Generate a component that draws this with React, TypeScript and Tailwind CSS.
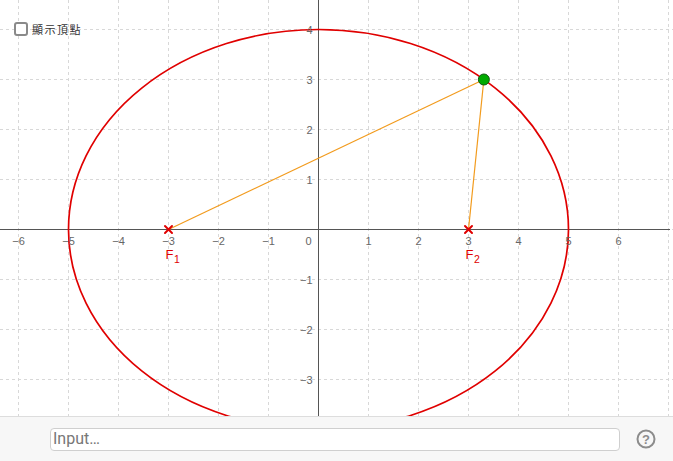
const OX = 318.5;
const OY = 229.5;
const U = 50;

const xs = [-6, -5, -4, -3, -2, -1, 1, 2, 3, 4, 5, 6];
const ys = [4, 3, 2, 1, -1, -2, -3];

const px = (x: number) => OX + x * U;
const py = (y: number) => OY - y * U;

function Cross({ x, y }: { x: number; y: number }) {
  const s = 3.5;
  return (
    <g stroke="#e00000" strokeWidth={2} strokeLinecap="round">
      <line x1={x - s} y1={y - s} x2={x + s} y2={y + s} />
      <line x1={x - s} y1={y + s} x2={x + s} y2={y - s} />
    </g>
  );
}

function Graph() {
  const P = { x: px(5 * Math.sqrt(0.4375)), y: py(3) };
  const F1 = { x: px(-3), y: OY };
  const F2 = { x: px(3), y: OY };
  return (
    <svg width="673" height="416" className="block">
      <rect width="673" height="416" fill="#ffffff" />
      <g stroke="#d8d8d8" strokeWidth={1} strokeDasharray="3 3">
        {[-6, -5, -4, -3, -2, -1, 0, 1, 2, 3, 4, 5, 6, 7].map((i) => (
          <line key={"v" + i} x1={px(i)} y1={0} x2={px(i)} y2={416} />
        ))}
        {[4, 3, 2, 1, 0, -1, -2, -3].map((j) => (
          <line key={"h" + j} x1={0} y1={py(j)} x2={673} y2={py(j)} />
        ))}
      </g>
      <g stroke="#555555" strokeWidth={1}>
        <line x1={0} y1={OY} x2={670} y2={OY} />
        <line x1={OX} y1={0} x2={OX} y2={416} />
      </g>
      <ellipse cx={OX} cy={OY} rx={250} ry={200} fill="none" stroke="#e00000" strokeWidth={1.7} />
      <g stroke="#f29b1d" strokeWidth={1.2}>
        <line x1={F1.x} y1={F1.y} x2={P.x} y2={P.y} />
        <line x1={F2.x} y1={F2.y} x2={P.x} y2={P.y} />
      </g>
      <g fill="#666666" fontSize="11" fontFamily="'Liberation Sans', Arial, sans-serif">
        {xs.map((i) => (
          <text key={"xl" + i} x={px(i)} y={OY + 15} textAnchor="middle">
            {i < 0 ? "\u2212" + -i : i}
          </text>
        ))}
        <text x={OX - 10} y={OY + 15} textAnchor="middle">0</text>
        {ys.map((j) => (
          <text key={"yl" + j} x={OX - 6} y={py(j) + 4} textAnchor="end">
            {j < 0 ? "\u2212" + -j : j}
          </text>
        ))}
      </g>
      <Cross x={F1.x} y={F1.y} />
      <Cross x={F2.x} y={F2.y} />
      <g fill="#e00000" fontFamily="'Liberation Sans', Arial, sans-serif">
        <text x={F1.x - 3} y={OY + 29} fontSize="13">F</text>
        <text x={F1.x + 5.5} y={OY + 33.5} fontSize="10.5">1</text>
        <text x={F2.x - 3} y={OY + 29} fontSize="13">F</text>
        <text x={F2.x + 5.5} y={OY + 33.5} fontSize="10.5">2</text>
      </g>
      <circle cx={P.x} cy={P.y} r={5.5} fill="#00aa00" stroke="#115511" strokeWidth={1} />
    </svg>
  );
}

export default function App() {
  return (
    <div className="w-[673px] h-[461px] flex flex-col bg-white overflow-hidden font-['Liberation_Sans',Arial,sans-serif]">
      <div className="relative h-[416px] shrink-0">
        <Graph />
        <label className="absolute left-[14px] top-[22px] flex items-center gap-[4px]">
          <span className="w-[14px] h-[14px] rounded-[3px] border-2 border-[#8a8a8a] bg-white" />
          <span className="text-[11px] leading-none text-[#333] tracking-[1.5px] font-['Noto_Sans_CJK_TC',sans-serif]">顯示頂點</span>
        </label>
      </div>
      <div className="flex-1 flex items-center bg-[#f7f7f7] border-t border-[#dddddd] pl-[50px] gap-[16px]">
        <div className="w-[570px] shrink-0 h-[23px] flex items-center bg-white border border-[#cfcfcf] rounded-[4px] px-[2px]">
          <span className="text-[16px] leading-none text-[#777] font-['Roboto',sans-serif]">Input…</span>
        </div>
        <svg width="20" height="20" viewBox="0 0 20 20" className="shrink-0">
          <circle cx="10" cy="10" r="8.5" fill="none" stroke="#8c8c8c" strokeWidth="2" />
          <text x="10" y="14.5" textAnchor="middle" fontSize="13" fontWeight="bold" fill="#8c8c8c" fontFamily="'Liberation Sans', Arial, sans-serif">?</text>
        </svg>
      </div>
    </div>
  );
}
